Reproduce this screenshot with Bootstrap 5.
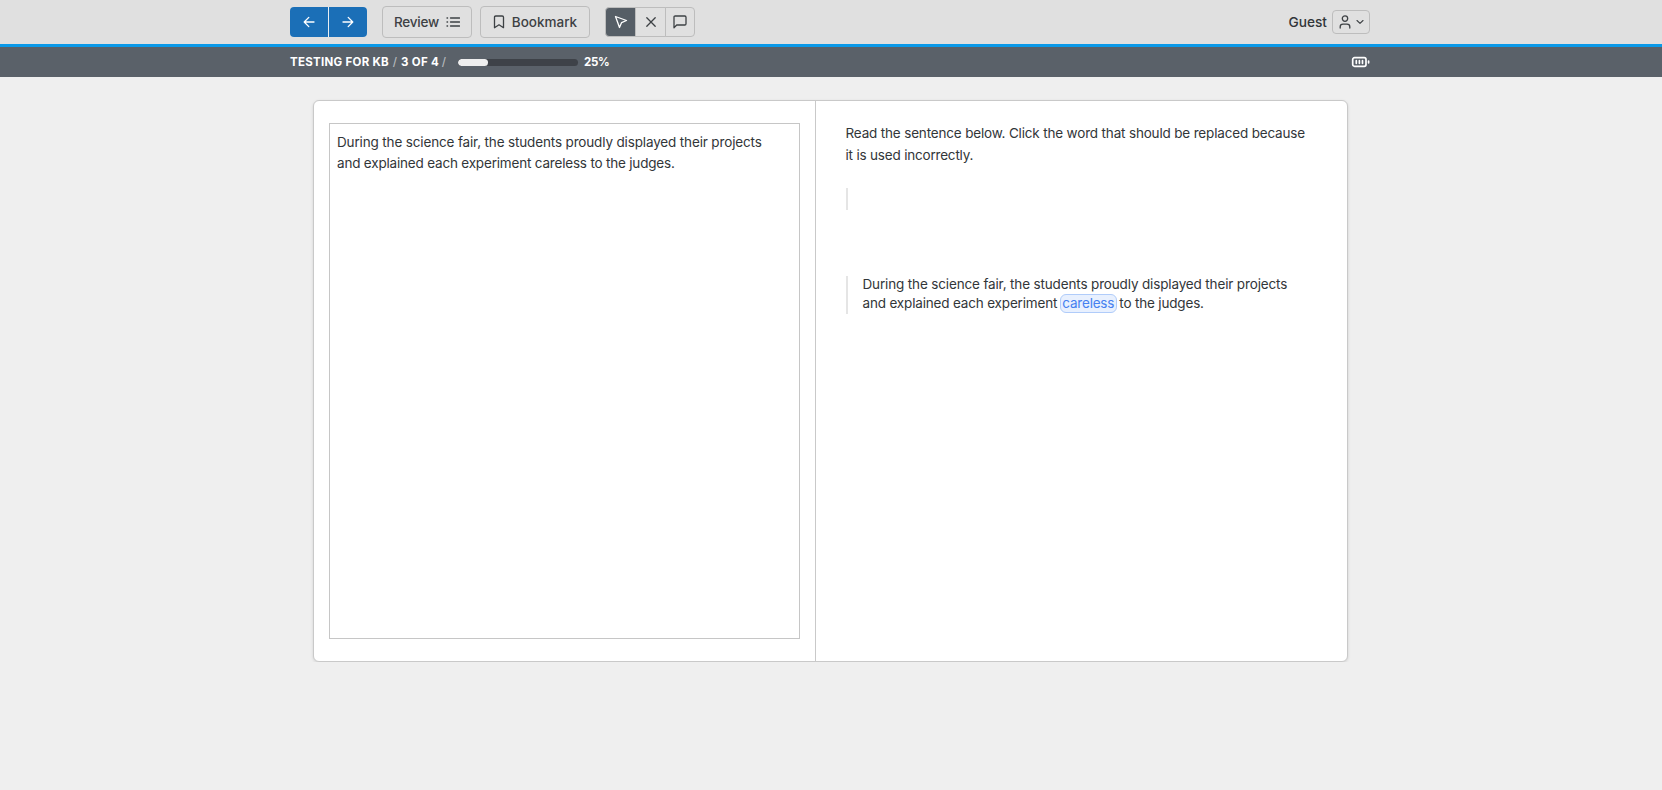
<!DOCTYPE html>
<html lang="en">
<head>
<meta charset="utf-8">
<title>Testing for KB</title>
<link href="https://cdn.jsdelivr.net/npm/bootstrap@5.3.0/dist/css/bootstrap.min.css" rel="stylesheet">
<script src="https://cdn.jsdelivr.net/npm/bootstrap@5.3.0/dist/js/bootstrap.bundle.min.js" defer></script>
<style>
body{background:#efefef;color:#323639;font:13.5px/21px Inter,"Open Sans",sans-serif;letter-spacing:-.15px;overflow:hidden}
.shell{width:1080px;margin:0 auto}
.bar{padding-right:2px}
.topbar{background:#e0e0e0;height:47px;border-bottom:3px solid #0a99e8}
.subbar{background:#5a6169;height:30px;color:#fff;font-size:11.5px;font-weight:700;letter-spacing:.2px}
.tool-btn{--bs-btn-border-radius:4px;border:1px solid #bdbdbd;color:#3d4144;background:#e0e0e0;--bs-btn-padding-x:0;--bs-btn-padding-y:0;font-size:13.5px;font-weight:500;line-height:20px;display:inline-flex;align-items:center;justify-content:center;white-space:nowrap}
.nav-btn{background:#1b6fb7;color:#fff;border:0;height:30px;width:38px}
.nav-btn+.nav-btn{margin-left:1px!important}
.nav-set{background:#e8eef3;border-radius:4px;width:77px}
.rev{width:90px;height:32px;gap:7px;margin-left:15px;letter-spacing:-.2px}
.bkm{width:110px;height:32px;gap:7px;letter-spacing:0}
.modes{margin-left:15px}
.mode{width:31px;height:30px;flex:none!important}
.mode.on{background:#565e66;color:#fff}
.mode:last-child{width:30px}
.user{width:38px;height:24px;gap:3px}
.guest{font-weight:500;font-size:13.7px;letter-spacing:0;margin-right:5px}
.ic{fill:none;stroke:currentColor;stroke-width:1.3;stroke-linecap:round;stroke-linejoin:round;flex:none}
.chev{stroke-width:1.1}
.sep{color:#b4b8bc;font-weight:500;width:12px;text-align:center}
.crumb-a{width:99px;white-space:nowrap;letter-spacing:.28px}
.crumb-b{width:37px;white-space:nowrap;letter-spacing:.3px}
.pct{letter-spacing:-.3px;margin-left:6px}
.meter{--bs-progress-height:7px;--bs-progress-bg:#3e4248;--bs-progress-bar-bg:#eee;--bs-progress-border-radius:4px;width:120px;margin-left:8px}
.meter .progress-bar{border-radius:4px}
.work{width:1035px;height:562px;border:1px solid #c9c9c9;border-radius:6px;margin:23px 0 0 23px;background:#fff;box-shadow:0 1px 3px rgba(0,0,0,.13)}
.left-pane{flex:none;width:502px;border-right:1px solid #c9c9c9;padding:22px 15px}
.passage{border:1px solid #c6c6c6;height:516px;padding:8px 7px}
.right-pane{padding:21px 30px}
.ln{display:block;white-space:nowrap}
.tight{letter-spacing:-.19px}
.prompt{line-height:22px;margin:0 0 22px -.5px;letter-spacing:-.17px}
.quote{border-left:2px solid #e5e5e5}
.empty-q{height:22px;margin-bottom:66px}
.answer{line-height:19px;padding-left:14.5px;display:flow-root;height:38px}
.answer .ln:first-child{margin-top:-1px}
.answer .ln:last-child{letter-spacing:-.17px}
.pick{display:inline-block;height:19px;line-height:17px;border:1px solid #b0ccfa;background:#e8f0fe;color:#4580f0;border-radius:6px;padding:0 1.5px;margin:0 -1px;vertical-align:top;letter-spacing:-.22px}
</style>
</head>
<body>
<header>
<div class="topbar bar"><div class="shell h-100 d-flex align-items-center">
 <div class="btn-group nav-set">
  <button class="btn tool-btn nav-btn" aria-label="Previous"><svg class="ic" width="12" height="12" viewBox="0 0 12 12"><path d="M11 6H1.2M5.8 1.4L1.2 6l4.6 4.6"/></svg></button>
  <button class="btn tool-btn nav-btn" aria-label="Next"><svg class="ic" width="12" height="12" viewBox="0 0 12 12"><path d="M1 6h9.8M6.2 1.4L10.8 6l-4.6 4.6"/></svg></button>
 </div>
 <button class="btn tool-btn rev"><span>Review</span><svg class="ic" width="14" height="12" viewBox="0 0 14 12"><path d="M4.5 2h9M4.5 6h9M4.5 10h9M1 2h.6M1 6h.6M1 10h.6"/></svg></button>
 <button class="btn tool-btn bkm ms-2"><svg class="ic" width="12" height="14" viewBox="0 0 12 14"><path d="M1.5 12.7V2.3Q1.5 1 2.8 1h6.4q1.3 0 1.3 1.3v10.4L6 9.8z"/></svg><span>Bookmark</span></button>
 <div class="btn-group modes">
  <button class="btn tool-btn mode on" aria-label="Select"><svg class="ic" width="14" height="14" viewBox="0 0 14 14"><path d="M1.5 1.5l11 4-4.9 2.1-2.1 4.9z"/></svg></button>
  <button class="btn tool-btn mode" aria-label="Eliminate"><svg class="ic" width="12" height="12" viewBox="0 0 12 12"><path d="M1.8 1.8l8.4 8.4M10.2 1.8l-8.4 8.4"/></svg></button>
  <button class="btn tool-btn mode" aria-label="Comment"><svg class="ic" width="14" height="14" viewBox="0 0 14 14"><path d="M1 12.7V2.2Q1 1 2.2 1h9.6Q13 1 13 2.2v6.6q0 1.2-1.2 1.2H3.7z"/></svg></button>
 </div>
 <span class="ms-auto guest">Guest</span>
 <button class="btn tool-btn user" aria-label="Account"><svg class="ic" width="14" height="14" viewBox="0 0 14 14"><circle cx="7" cy="3.6" r="2.7"/><path d="M2.2 13v-1.2q0-2.6 2.8-2.6h4q2.8 0 2.8 2.6V13"/></svg><svg class="ic chev" width="10" height="8" viewBox="0 0 10 8"><path d="M2 2.5L5 5.4l3-2.9"/></svg></button>
</div></div>
<div class="subbar bar"><div class="shell h-100 d-flex align-items-center">
 <span class="crumb-a">TESTING FOR KB</span><span class="sep">/</span><span class="crumb-b">3 OF 4</span><span class="sep">/</span>
 <div class="progress meter"><div class="progress-bar" style="width:25%"></div></div><span class="pct">25%</span>
 <svg class="ic ms-auto" width="19" height="12" viewBox="0 0 19 12"><rect x="1.7" y="1.7" width="13.3" height="8.6" rx="1.8" stroke-width="1.7"/><path d="M5.3 4.7v2.6M8.4 4.7v2.6M11.5 4.7v2.6M17.6 5.2v1.6" stroke-width="1.7"/></svg>
</div></div>
</header>
<main class="bar"><div class="shell">
 <div class="work d-flex">
  <section class="left-pane"><div class="passage"><span class="ln">During the science fair, the students proudly displayed their projects</span><span class="ln tight">and explained each experiment careless to the judges.</span></div></section>
  <section class="right-pane flex-fill">
   <div class="prompt"><span class="ln">Read the sentence below. Click the word that should be replaced because</span><span class="ln tight">it is used incorrectly.</span></div>
   <div class="quote empty-q"></div>
   <div class="quote answer"><span class="ln">During the science fair, the students proudly displayed their projects</span><span class="ln">and explained each experiment <span class="pick">careless</span> to the judges.</span></div>
  </section>
 </div>
</div></main>
</body>
</html>
